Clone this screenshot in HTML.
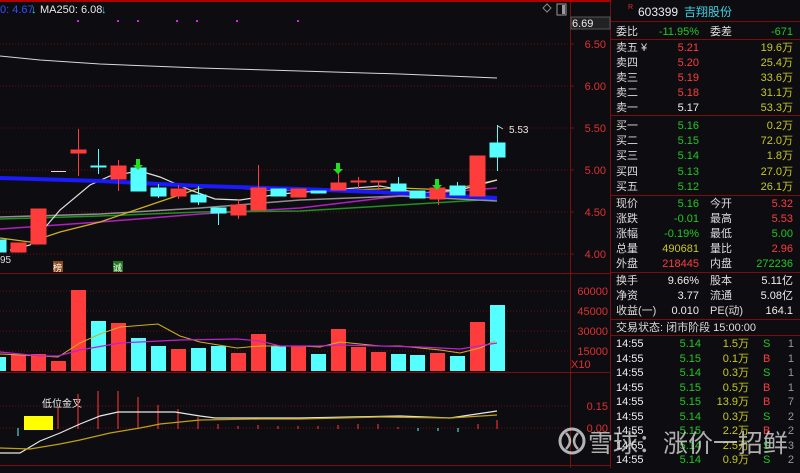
<!DOCTYPE html>
<html><head><meta charset="utf-8"><style>
html,body{margin:0;padding:0;background:#0d0d11;}
svg text{font-family:"Liberation Sans","Noto Sans CJK SC",sans-serif;}
</style></head><body>
<svg width="800" height="468" viewBox="0 0 800 468" xmlns="http://www.w3.org/2000/svg">
<rect width="800" height="468" fill="#0d0d11"/>
<!-- top red line -->
<rect x="0" y="0" width="610" height="2" fill="#b00000"/>
<!-- grid -->
<g stroke="#6a0c0c" stroke-width="1" stroke-dasharray="1,2">
<line x1="0" y1="44" x2="570" y2="44"/><line x1="0" y1="86" x2="570" y2="86"/>
<line x1="0" y1="128" x2="570" y2="128"/><line x1="0" y1="170" x2="570" y2="170"/>
<line x1="0" y1="212" x2="570" y2="212"/><line x1="0" y1="254" x2="570" y2="254"/>
<line x1="0" y1="291" x2="570" y2="291"/><line x1="0" y1="311" x2="570" y2="311"/>
<line x1="0" y1="331" x2="570" y2="331"/><line x1="0" y1="351" x2="570" y2="351"/>
<line x1="0" y1="406" x2="570" y2="406"/><line x1="0" y1="428" x2="570" y2="428"/>
</g>
<g stroke="#7a0e0e" stroke-width="1">
<line x1="0" y1="273.5" x2="610" y2="273.5"/><line x1="0" y1="372.5" x2="610" y2="372.5"/>
<line x1="0" y1="465.5" x2="610" y2="465.5"/><line x1="570.5" y1="2" x2="570.5" y2="468"/>
<line x1="610.5" y1="0" x2="610.5" y2="468"/>
</g>
<!-- header -->
<text x="0" y="13" font-size="11" fill="#3050ff">0: 4.67</text>
<text x="31" y="13" font-size="11" fill="#40d0e0">↓</text>
<text x="40" y="13" font-size="11" fill="#e8e8e8">MA250: 6.08</text>
<text x="101" y="13" font-size="11" fill="#40d0e0">↓</text>
<g fill="#e020e0"><rect x="77" y="20" width="2" height="2"/><rect x="117" y="20" width="2" height="2"/><rect x="137" y="20" width="2" height="2"/><rect x="176" y="20" width="2" height="2"/><rect x="196" y="20" width="2" height="2"/><rect x="236" y="20" width="2" height="2"/><rect x="297" y="20" width="2" height="2"/></g>
<path d="M547 4 l4 4 -4 4 -4 -4z" fill="none" stroke="#888"/>
<rect x="557" y="4" width="9" height="11" fill="none" stroke="#999"/><rect x="562" y="5" width="3" height="9" fill="#999"/>
<!-- price axis -->
<rect x="571" y="17" width="39" height="12" fill="#222" stroke="#555"/>
<text x="572" y="27" font-size="11" fill="#eee">6.69</text>
<g font-size="11" fill="#e03030" text-anchor="end">
<text x="606" y="48">6.50</text><text x="606" y="90">6.00</text><text x="606" y="132">5.50</text>
<text x="606" y="174">5.00</text><text x="606" y="216">4.50</text><text x="606" y="258">4.00</text>
<text x="608" y="295">60000</text><text x="608" y="315">45000</text><text x="608" y="335">30000</text><text x="608" y="355">15000</text>
<text x="608" y="410">0.15</text><text x="608" y="432">0.00</text>
</g>
<text x="571" y="368" font-size="11" fill="#e03030">X10</text>
<g stroke="#7a0e0e"><line x1="570" y1="44" x2="574" y2="44"/><line x1="570" y1="86" x2="574" y2="86"/><line x1="570" y1="128" x2="574" y2="128"/><line x1="570" y1="170" x2="574" y2="170"/><line x1="570" y1="212" x2="574" y2="212"/><line x1="570" y1="254" x2="574" y2="254"/></g>
<!-- MA250 line -->
<polyline points="0,56 40,60 100,64 200,68 300,71 400,74 497,78" fill="none" stroke="#d8d8d8" stroke-width="1"/>
<!-- MAs -->
<polyline points="0,229 100,222 200,214 300,208 400,196 497,188" fill="none" stroke="#b020c0" stroke-width="1.5"/>
<polyline points="0,219 100,216 200,212 300,211 400,205 497,199" fill="none" stroke="#209020" stroke-width="1.5"/>
<polyline points="0,217 100,214 200,208 300,200 400,196 497,201" fill="none" stroke="#909090" stroke-width="1.5"/>
<polyline points="0,238 30,242 60,232 100,222 150,205 200,188 215,186 260,190 330,191 400,188 450,190 497,180" fill="none" stroke="#d0b020" stroke-width="1.2"/>
<polyline points="10,250 30,245 60,210 90,185 110,176 140,171 160,177 190,190 215,199 240,200 280,194 330,190 380,186 420,193 460,190 497,180" fill="none" stroke="#e0e0e0" stroke-width="1.2"/>
<polyline points="0,178 100,181 200,186 300,189 400,193 497,198" fill="none" stroke="#1a1aff" stroke-width="4"/>
<!-- candles -->
<g fill="#ff3c3c" stroke="#ff3c3c">
<rect x="11" y="243" width="15" height="9"/>
<rect x="31" y="209" width="15" height="35"/>
<line x1="78.5" y1="129" x2="78.5" y2="176"/><rect x="71" y="150" width="15" height="3"/>
<line x1="118.5" y1="160" x2="118.5" y2="191"/><rect x="111" y="166" width="15" height="13"/>
<line x1="178.5" y1="185" x2="178.5" y2="199"/><rect x="171" y="189" width="15" height="7"/>
<line x1="238.5" y1="199" x2="238.5" y2="219"/><rect x="231" y="205" width="15" height="10"/>
<line x1="258.5" y1="165" x2="258.5" y2="210"/><rect x="251" y="188" width="15" height="22"/>
<rect x="291" y="189" width="15" height="8"/>
<line x1="338.5" y1="173" x2="338.5" y2="190"/><rect x="331" y="183" width="15" height="7"/>
<line x1="358.5" y1="177" x2="358.5" y2="189"/><rect x="351" y="181" width="15" height="1"/>
<line x1="378.5" y1="181" x2="378.5" y2="190"/><rect x="371" y="181" width="15" height="1"/>
<line x1="438.5" y1="188" x2="438.5" y2="205"/><rect x="430" y="188" width="15" height="11"/>
<rect x="470" y="156" width="15" height="40"/>
</g>
<rect x="51" y="171" width="15" height="1" fill="#ddd"/>
<g fill="#55ffff" stroke="#55ffff">
<rect x="0" y="240" width="6" height="12"/>
<line x1="98.5" y1="149" x2="98.5" y2="174"/><rect x="91" y="166" width="15" height="1"/>
<rect x="131" y="168" width="15" height="23"/>
<line x1="158.5" y1="184" x2="158.5" y2="198"/><rect x="151" y="188" width="15" height="8"/>
<line x1="198.5" y1="186" x2="198.5" y2="205"/><rect x="191" y="195" width="15" height="7"/>
<line x1="218.5" y1="208" x2="218.5" y2="225"/><rect x="211" y="208" width="15" height="5"/>
<rect x="271" y="189" width="15" height="7"/>
<rect x="311" y="191" width="15" height="2"/>
<line x1="398.5" y1="177" x2="398.5" y2="191"/><rect x="391" y="184" width="15" height="7"/>
<rect x="410" y="191" width="15" height="7"/>
<line x1="457.5" y1="182" x2="457.5" y2="195"/><rect x="450" y="186" width="15" height="9"/>
<line x1="497.5" y1="125" x2="497.5" y2="171"/><rect x="490" y="143" width="15" height="14"/>
</g>
<g fill="#20e020"><path d="M136 159h4v6h3l-5 5-5-5h3z"/><path d="M336 163h4v6h3l-5 5-5-5h3z"/><path d="M435 179h4v6h3l-5 5-5-5h3z"/></g>
<path d="M498 126 l5 3" stroke="#ccc"/>
<text x="509" y="133" font-size="10" fill="#e8e8e8">5.53</text>
<text x="0" y="263" font-size="10" fill="#ddd">95</text>
<rect x="53" y="261" width="10" height="11" fill="#8a4a1a"/><text x="53" y="271" font-size="9" fill="#fff">榜</text>
<rect x="113" y="261" width="10" height="11" fill="#1a7a1a"/><text x="113" y="271" font-size="9" fill="#fff">诚</text>
<!-- volume -->
<g fill="#ff3c3c">
<rect x="11" y="354" width="15" height="17"/><rect x="31" y="354" width="15" height="17"/><rect x="51" y="361" width="15" height="10"/><rect x="71" y="290" width="15" height="81"/>
<rect x="111" y="323" width="15" height="48"/><rect x="171" y="349" width="15" height="22"/><rect x="231" y="353" width="15" height="18"/><rect x="251" y="334" width="15" height="37"/>
<rect x="291" y="346" width="15" height="25"/><rect x="331" y="329" width="15" height="42"/><rect x="351" y="347" width="15" height="24"/><rect x="371" y="352" width="15" height="19"/>
<rect x="430" y="353" width="15" height="18"/><rect x="470" y="322" width="15" height="49"/>
</g>
<g fill="#55ffff">
<rect x="0" y="357" width="6" height="14"/><rect x="91" y="321" width="15" height="50"/><rect x="131" y="338" width="15" height="33"/><rect x="151" y="346" width="15" height="25"/>
<rect x="191" y="348" width="15" height="23"/><rect x="211" y="346" width="15" height="25"/><rect x="271" y="346" width="15" height="25"/><rect x="311" y="354" width="15" height="17"/>
<rect x="391" y="354" width="15" height="17"/><rect x="410" y="355" width="15" height="16"/><rect x="450" y="356" width="15" height="15"/><rect x="490" y="305" width="15" height="66"/>
</g>
<polyline points="0,354 40,356 58,357 80,343 100,334 120,327 158,324 180,336 200,342 237,348 260,346 280,346 300,346 320,347 340,342 360,344 380,346 400,346 440,350 460,353 480,348 495,341" fill="none" stroke="#d0b020" stroke-width="1"/>
<polyline points="0,352 40,356 58,356 80,350 120,343 180,340 237,339 260,341 280,346 320,346 340,345 380,346 420,347 460,349 497,343" fill="none" stroke="#c020d0" stroke-width="1.2"/>
<!-- MACD -->
<rect x="24" y="416" width="29" height="14" fill="#ffff00"/>
<text x="42" y="407" font-size="10" fill="#eee">低位金叉</text>
<g stroke="#e03030" stroke-width="1.2">
<line x1="58" y1="408" x2="58" y2="429"/><line x1="78" y1="394" x2="78" y2="429"/><line x1="98" y1="391" x2="98" y2="429"/><line x1="118" y1="391" x2="118" y2="429"/>
<line x1="138" y1="397" x2="138" y2="429"/><line x1="158" y1="405" x2="158" y2="429"/><line x1="178" y1="409" x2="178" y2="429"/><line x1="198" y1="417" x2="198" y2="429"/>
<line x1="218" y1="424" x2="218" y2="429"/><line x1="238" y1="426" x2="238" y2="429"/><line x1="258" y1="425" x2="258" y2="429"/><line x1="278" y1="426" x2="278" y2="429"/>
<line x1="298" y1="426" x2="298" y2="429"/><line x1="318" y1="426" x2="318" y2="429"/><line x1="338" y1="425" x2="338" y2="429"/><line x1="358" y1="424" x2="358" y2="429"/>
<line x1="378" y1="424" x2="378" y2="429"/><line x1="398" y1="427" x2="398" y2="429"/><line x1="478" y1="424" x2="478" y2="429"/><line x1="497" y1="420" x2="497" y2="429"/>
</g>
<g stroke="#55ffff"><line x1="18" y1="428" x2="18" y2="436"/><line x1="418" y1="428" x2="418" y2="431"/><line x1="438" y1="428" x2="438" y2="431"/><line x1="458" y1="428" x2="458" y2="432"/></g>
<polyline points="0,453 20,453 40,441 60,433 80,424 100,416 118,412 175,412 200,416 215,418 300,418 350,417 400,416 450,418 470,415 497,411" fill="none" stroke="#e8e8e8" stroke-width="1.2"/>
<polyline points="0,448 30,449 60,444 80,440 110,433 140,428 160,424 200,420 260,419 300,419 380,417 450,418 497,415" fill="none" stroke="#c0a010" stroke-width="1.2"/>
<!-- right panel -->
<g stroke="#7a0e0e"><line x1="611" y1="21.5" x2="800" y2="21.5"/><line x1="611" y1="39.5" x2="800" y2="39.5"/><line x1="611" y1="115.5" x2="800" y2="115.5"/><line x1="611" y1="195.5" x2="800" y2="195.5"/><line x1="611" y1="272.5" x2="800" y2="272.5"/><line x1="611" y1="319.5" x2="800" y2="319.5"/><line x1="611" y1="335.5" x2="800" y2="335.5"/></g>
<text x="628" y="9" font-size="7" fill="#e03030">R</text>
<text x="638" y="16" font-size="12" fill="#eee">603399</text><text x="684" y="16" font-size="12" fill="#3cd0e0">吉翔股份</text>
<g font-size="11" fill="#ddd">
<text x="616" y="35">委比</text><text x="710" y="35">委差</text>
<text x="616" y="51">卖五 ¥</text><text x="616" y="66">卖四</text><text x="616" y="81">卖三</text><text x="616" y="96">卖二</text><text x="616" y="111">卖一</text>
<text x="616" y="129">买一</text><text x="616" y="144">买二</text><text x="616" y="159">买三</text><text x="616" y="175">买四</text><text x="616" y="190">买五</text>
<text x="616" y="207">现价</text><text x="710" y="207">今开</text><text x="616" y="222">涨跌</text><text x="710" y="222">最高</text>
<text x="616" y="237">涨幅</text><text x="710" y="237">最低</text><text x="616" y="252">总量</text><text x="710" y="252">量比</text>
<text x="616" y="267">外盘</text><text x="710" y="267">内盘</text>
<text x="616" y="284">换手</text><text x="710" y="284">股本</text><text x="616" y="299">净资</text><text x="710" y="299">流通</text>
<text x="616" y="314">收益(一)</text><text x="710" y="314">PE(动)</text>
<text x="616" y="331">交易状态: 闭市阶段 15:00:00</text>
</g>
<g font-size="11" text-anchor="end">
<text x="699" y="35" fill="#22c822">-11.95%</text><text x="793" y="35" fill="#22c822">-671</text>
<text x="699" y="51" fill="#ff3c3c">5.21</text><text x="699" y="66" fill="#ff3c3c">5.20</text><text x="699" y="81" fill="#ff3c3c">5.19</text><text x="699" y="96" fill="#ff3c3c">5.18</text><text x="699" y="111" fill="#eee">5.17</text>
<text x="699" y="129" fill="#22c822">5.16</text><text x="699" y="144" fill="#22c822">5.15</text><text x="699" y="159" fill="#22c822">5.14</text><text x="699" y="175" fill="#22c822">5.13</text><text x="699" y="190" fill="#22c822">5.12</text>
<g fill="#c8c820"><text x="793" y="51">19.6万</text><text x="793" y="66">25.4万</text><text x="793" y="81">33.6万</text><text x="793" y="96">31.1万</text><text x="793" y="111">53.3万</text>
<text x="793" y="129">0.2万</text><text x="793" y="144">72.0万</text><text x="793" y="159">1.8万</text><text x="793" y="175">27.0万</text><text x="793" y="190">26.1万</text></g>
<text x="699" y="207" fill="#22c822">5.16</text><text x="793" y="207" fill="#ff3c3c">5.32</text>
<text x="699" y="222" fill="#22c822">-0.01</text><text x="793" y="222" fill="#ff3c3c">5.53</text>
<text x="699" y="237" fill="#22c822">-0.19%</text><text x="793" y="237" fill="#22c822">5.00</text>
<text x="699" y="252" fill="#c8c820">490681</text><text x="793" y="252" fill="#ff3c3c">2.96</text>
<text x="699" y="267" fill="#ff3c3c">218445</text><text x="793" y="267" fill="#22c822">272236</text>
<g fill="#eee"><text x="699" y="284">9.66%</text><text x="793" y="284">5.11亿</text><text x="699" y="299">3.77</text><text x="793" y="299">5.08亿</text><text x="699" y="314">0.010</text><text x="793" y="314">164.1</text></g>
</g>
<g font-size="11">
<g fill="#eee"><text x="616" y="347">14:55</text><text x="616" y="362">14:55</text><text x="616" y="376">14:55</text><text x="616" y="391">14:55</text><text x="616" y="405">14:55</text><text x="616" y="420">14:55</text><text x="616" y="434">14:55</text><text x="616" y="449">14:55</text><text x="616" y="463">14:55</text></g>
<g fill="#22c822" text-anchor="end"><text x="701" y="347">5.14</text><text x="701" y="362">5.15</text><text x="701" y="376">5.14</text><text x="701" y="391">5.15</text><text x="701" y="405">5.15</text><text x="701" y="420">5.14</text><text x="701" y="434">5.15</text><text x="701" y="449">5.14</text><text x="701" y="463">5.14</text></g>
<g fill="#c8c820" text-anchor="end"><text x="749" y="347">1.5万</text><text x="749" y="362">0.1万</text><text x="749" y="376">0.3万</text><text x="749" y="391">0.5万</text><text x="749" y="405">13.9万</text><text x="749" y="420">0.3万</text><text x="749" y="434">2.2万</text><text x="749" y="449">2.5万</text><text x="749" y="463">0.9万</text></g>
<text x="763" y="347" fill="#22c822">S</text><text x="763" y="362" fill="#ff3c3c">B</text><text x="763" y="376" fill="#22c822">S</text><text x="763" y="391" fill="#ff3c3c">B</text><text x="763" y="405" fill="#ff3c3c">B</text><text x="763" y="420" fill="#22c822">S</text><text x="763" y="434" fill="#ff3c3c">B</text><text x="763" y="449" fill="#22c822">S</text><text x="763" y="463" fill="#22c822">S</text>
<g fill="#999" text-anchor="end"><text x="794" y="347">1</text><text x="794" y="362">1</text><text x="794" y="376">1</text><text x="794" y="391">1</text><text x="794" y="405">7</text><text x="794" y="420">2</text><text x="794" y="434">2</text><text x="794" y="449">3</text><text x="794" y="463">2</text></g>
</g>
<!-- watermark -->
<g opacity="0.8">
<circle cx="572" cy="441" r="12" fill="none" stroke="#ddd" stroke-width="3"/>
<path d="M566 433 q8 8 0 16 M578 433 q-8 8 0 16" fill="none" stroke="#ddd" stroke-width="2.5"/>
<text x="588" y="452" font-size="25" fill="#d8d8d8">雪球：涨价一招鲜</text>
</g>
</svg>
</body></html>
